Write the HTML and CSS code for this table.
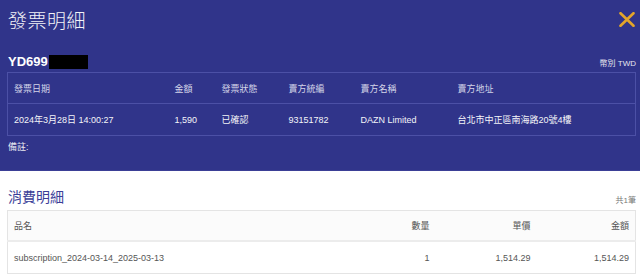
FILE: index.html
```html
<!DOCTYPE html>
<html lang="zh-Hant">
<head>
<meta charset="utf-8">
<title>發票明細</title>
<link rel="stylesheet" href="styles.css">
</head>
<body>
<section class="top">
  <div class="title-row">
    <h1 class="title">發票明細</h1>
    <button class="close" aria-label="close">
      <svg width="16" height="15" viewBox="0 0 16 15"><path d="M1.5 1.2 L14.5 13.8 M14.5 1.2 L1.5 13.8" stroke="#e3a52a" stroke-width="2.6" stroke-linecap="round"/></svg>
    </button>
  </div>
  <div class="id-row">
    <span class="inv">YD699<span class="mask"></span></span>
    <span class="cur">幣別 TWD</span>
  </div>
  <table class="info">
    <colgroup><col class="c1"><col class="c2"><col class="c3"><col class="c4"><col class="c5"><col></colgroup>
    <thead>
      <tr><th>發票日期</th><th>金額</th><th>發票狀態</th><th>賣方統編</th><th>賣方名稱</th><th>賣方地址</th></tr>
    </thead>
    <tbody>
      <tr><td>2024年3月28日 14:00:27</td><td>1,590</td><td>已確認</td><td>93151782</td><td>DAZN Limited</td><td>台北市中正區南海路20號4樓</td></tr>
    </tbody>
  </table>
  <div class="note">備註:</div>
</section>
<section class="bottom">
  <div class="sec-row">
    <h2 class="sec-title">消費明細</h2>
    <span class="count">共1筆</span>
  </div>
  <table class="items">
    <colgroup><col><col class="q"><col class="p"><col class="a"></colgroup>
    <thead>
      <tr><th class="l">品名</th><th>數量</th><th>單價</th><th>金額</th></tr>
    </thead>
    <tbody>
      <tr><td class="l">subscription_2024-03-14_2025-03-13</td><td>1</td><td>1,514.29</td><td>1,514.29</td></tr>
    </tbody>
  </table>
</section>
</body>
</html>
```

FILE: styles.css
```css
html, body {
  margin: 0;
  padding: 0;
  background: #ffffff;
  font-family: "Liberation Sans", Arial, "Noto Sans CJK TC", sans-serif;
  width: 640px;
  height: 275px;
  overflow: hidden;
}

.top {
  background: #30348a;
  padding: 0 4px 17px 7px;
  border-bottom: 1px solid #3b3f96;
  color: #ffffff;
}

.title-row {
  height: 40px;
  display: flex;
  align-items: center;
  justify-content: space-between;
}

.title {
  margin: 0 0 0 1px;
  font-family: "Noto Sans CJK TC", sans-serif;
  font-weight: 300;
  font-size: 19px;
  letter-spacing: 0.5px;
  color: #f2f2f7;
  line-height: 22px;
}

.close {
  border: 0;
  background: transparent;
  padding: 0;
  margin: 0 1px 1px 0;
  width: 16px;
  height: 15px;
  display: flex;
}

.id-row {
  margin-top: 13px;
  height: 17px;
  display: flex;
  align-items: center;
  justify-content: space-between;
  padding-left: 1px;
}

.inv {
  font-weight: bold;
  font-size: 13px;
  display: flex;
  align-items: center;
}

.mask {
  display: inline-block;
  width: 39px;
  height: 14px;
  background: #000;
  margin-left: 1px;
}

.cur {
  font-size: 8px;
  color: #e6e6ef;
  margin-top: 1px;
  font-family: "Liberation Sans", "Noto Sans CJK TC", sans-serif;
}

.info {
  margin-top: 2px;
  width: 100%;
  border-collapse: collapse;
  table-layout: fixed;
  border: 1px solid #4c50a6;
  font-size: 9px;
}

.info .c1 { width: 161px; }
.info .c2 { width: 47px; }
.info .c3 { width: 67px; }
.info .c4 { width: 72px; }
.info .c5 { width: 97px; }

.info th, .info td {
  text-align: left;
  padding: 0 6px;
  white-space: nowrap;
}

.info th {
  font-weight: normal;
  color: #d4d5e8;
  height: 30px;
  border-bottom: 1px solid #4c50a6;
}

.info td {
  color: #f4f4f8;
  height: 31px;
}

.note {
  margin-top: 5px;
  font-size: 9px;
  line-height: 12px;
  padding-left: 1px;
  color: #e8e8f0;
}

.bottom {
  padding: 0 4px 0 7px;
}

.sec-row {
  margin-top: 16px;
  display: flex;
  align-items: flex-end;
  justify-content: space-between;
  height: 19px;
}

.sec-title {
  margin: 0 0 0 1px;
  font-family: "Noto Sans CJK TC", sans-serif;
  font-weight: 400;
  font-size: 14px;
  line-height: 19px;
  color: #3a3e98;
}

.count {
  font-size: 8px;
  color: #777;
  line-height: 11px;
}

.items {
  margin-top: 4px;
  width: 100%;
  border-collapse: collapse;
  table-layout: fixed;
  border: 1px solid #e4e4e4;
  font-size: 9px;
  color: #555;
}

.items .q { width: 100px; }
.items .p { width: 101px; }
.items .a { width: 99px; }

.items th, .items td {
  text-align: right;
  padding: 0 6px;
  white-space: nowrap;
}

.items .l { text-align: left; }

.items th {
  font-weight: normal;
  height: 29px;
  background: #fbfbfb;
  border-bottom: 2px solid #ececec;
}

.items td {
  height: 31px;
}
```
